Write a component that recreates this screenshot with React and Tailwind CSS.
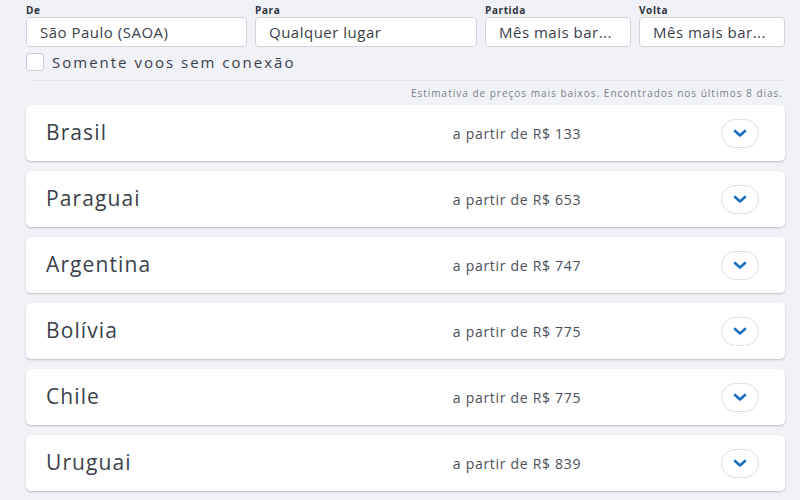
import React from 'react'

const font = { fontFamily: '"Open Sans", "Liberation Sans", sans-serif' }

const results = [
  { country: 'Brasil', price: 133 },
  { country: 'Paraguai', price: 653 },
  { country: 'Argentina', price: 747 },
  { country: 'Bolívia', price: 775 },
  { country: 'Chile', price: 775 },
  { country: 'Uruguai', price: 839 },
]

function Field({ label, value, width }) {
  return (
    <div className={width}>
      <div className="text-[10px] font-bold text-[#2f3440] leading-[12px] h-[13px] tracking-[0.6px]">{label}</div>
      <div className="h-[30px] rounded-[4px] border border-[#cfd4dc] bg-white flex items-center px-[13px] text-[15px] text-[#3b404b] tracking-[0.5px]">
        {value}
      </div>
    </div>
  )
}

function Chevron() {
  return (
    <div className="w-[38px] h-[29px] rounded-full border border-[#dcdfe6] bg-white flex items-center justify-center">
      <svg width="14" height="9" viewBox="0 0 14 9" fill="none">
        <path d="M2 2l5 4.5L12 2" stroke="#1d6fc2" strokeWidth="2.6" strokeLinecap="round" strokeLinejoin="round" />
      </svg>
    </div>
  )
}

export default function App() {
  return (
    <div className="w-[800px] h-[500px] overflow-hidden bg-[#f1f2f7]" style={font}>
      <div className="pl-[26px] pr-[15px] pt-[4px]">
        {/* busca */}
        <div className="flex gap-[8px]">
          <Field label="De" value="São Paulo (SAOA)" width="w-[221px]" />
          <Field label="Para" value="Qualquer lugar" width="w-[222px]" />
          <Field label="Partida" value="Mês mais bar..." width="w-[146px]" />
          <Field label="Volta" value="Mês mais bar..." width="w-[146px]" />
        </div>

        <label className="flex items-center gap-[8px] mt-[6px] h-[18px]">
          <span className="w-[18px] h-[18px] rounded-[3px] border border-[#c9ced6] bg-white" />
          <span className="text-[15px] text-[#3b404b] tracking-[2px] leading-[18px]">Somente voos sem conexão</span>
        </label>

        <div className="ml-[6px] mt-[9px] border-t border-[#dfe2e9]" />

        <p className="text-right text-[10px] text-[#7a7f8a] mt-[6px] pr-[2px] leading-[12px] tracking-[1px]">
          Estimativa de preços mais baixos. Encontrados nos últimos 8 dias.
        </p>

        {/* resultados */}
        <div className="flex flex-col gap-[10px] mt-[6px]">
          {results.map(r => (
            <div key={r.country} className="h-[56px] bg-white rounded-[5px] shadow-[0_1px_2px_rgba(60,70,90,0.3)] flex items-center pl-[20px] pr-[26px]">
              <div className="w-[400px] text-[21px] text-[#3a3f4a] tracking-[1.1px]">{r.country}</div>
              <div className="w-[142px] text-center text-[14px] text-[#4a4f5a] tracking-[0.7px]">a partir de R$ {r.price}</div>
              <div className="flex-1 flex justify-end">
                <Chevron />
              </div>
            </div>
          ))}
        </div>
      </div>
    </div>
  )
}
